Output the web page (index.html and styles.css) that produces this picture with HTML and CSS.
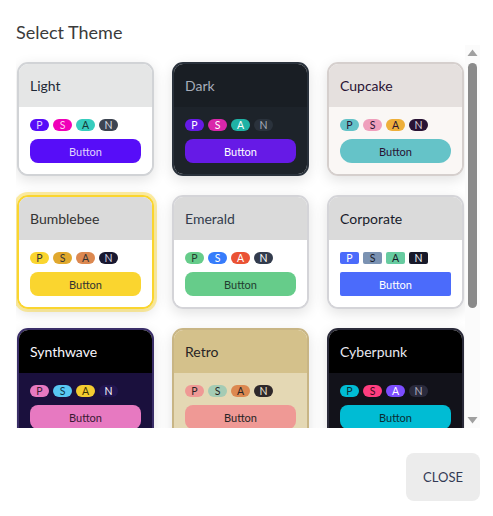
FILE: index.html
```html
<!DOCTYPE html>
<html>
<head>
<meta charset="utf-8">
<link rel="stylesheet" href="styles.css">
</head>
<body>
<div class="dialog">
  <h2 class="title">Select Theme</h2>
  <div class="pane">
    <div class="scroller">
      <div class="grid">
        <div class="card t-light">
          <div class="head">Light</div>
          <div class="body">
            <div class="badges"><span class="b p">P</span><span class="b s">S</span><span class="b a">A</span><span class="b n">N</span></div>
            <div class="btn">Button</div>
          </div>
        </div>
        <div class="card t-dark">
          <div class="head">Dark</div>
          <div class="body">
            <div class="badges"><span class="b p">P</span><span class="b s">S</span><span class="b a">A</span><span class="b n">N</span></div>
            <div class="btn">Button</div>
          </div>
        </div>
        <div class="card t-cupcake">
          <div class="head">Cupcake</div>
          <div class="body">
            <div class="badges"><span class="b p">P</span><span class="b s">S</span><span class="b a">A</span><span class="b n">N</span></div>
            <div class="btn">Button</div>
          </div>
        </div>
        <div class="card t-bumblebee selected">
          <div class="head">Bumblebee</div>
          <div class="body">
            <div class="badges"><span class="b p">P</span><span class="b s">S</span><span class="b a">A</span><span class="b n">N</span></div>
            <div class="btn">Button</div>
          </div>
        </div>
        <div class="card t-emerald">
          <div class="head">Emerald</div>
          <div class="body">
            <div class="badges"><span class="b p">P</span><span class="b s">S</span><span class="b a">A</span><span class="b n">N</span></div>
            <div class="btn">Button</div>
          </div>
        </div>
        <div class="card t-corporate">
          <div class="head">Corporate</div>
          <div class="body">
            <div class="badges"><span class="b p">P</span><span class="b s">S</span><span class="b a">A</span><span class="b n">N</span></div>
            <div class="btn">Button</div>
          </div>
        </div>
        <div class="card t-synthwave">
          <div class="head">Synthwave</div>
          <div class="body">
            <div class="badges"><span class="b p">P</span><span class="b s">S</span><span class="b a">A</span><span class="b n">N</span></div>
            <div class="btn">Button</div>
          </div>
        </div>
        <div class="card t-retro">
          <div class="head">Retro</div>
          <div class="body">
            <div class="badges"><span class="b p">P</span><span class="b s">S</span><span class="b a">A</span><span class="b n">N</span></div>
            <div class="btn">Button</div>
          </div>
        </div>
        <div class="card t-cyberpunk">
          <div class="head">Cyberpunk</div>
          <div class="body">
            <div class="badges"><span class="b p">P</span><span class="b s">S</span><span class="b a">A</span><span class="b n">N</span></div>
            <div class="btn">Button</div>
          </div>
        </div>
      </div>
    </div>
    <div class="scrollbar">
      <svg class="arrow" width="15" height="15" viewBox="0 0 15 15"><path d="M2.5 11 L7.5 4.5 L12.5 11 Z" fill="#a0a0a0"/></svg>
      <div class="track"><div class="thumb"></div></div>
      <svg class="arrow" width="15" height="15" viewBox="0 0 15 15"><path d="M2.5 4 L7.5 10.5 L12.5 4 Z" fill="#a0a0a0"/></svg>
    </div>
  </div>
  <div class="actions">
    <button class="close">CLOSE</button>
  </div>
</div>
</body>
</html>
```

FILE: styles.css
```css
* { box-sizing: border-box; }
html, body { margin: 0; padding: 0; background: #fff; }
body { font-family: Lato, "Noto Sans", sans-serif; color: #333; }

.dialog {
  width: 493px;
  height: 516px;
  padding: 20px 13px 15px 16px;
  display: flex;
  flex-direction: column;
}
.title {
  margin: 0;
  font-size: 18px;
  font-weight: 400;
  color: #3b3b3b;
  line-height: 24px;
  height: 25px;
}
.pane {
  display: flex;
  height: 383px;
}
.scroller {
  width: 449px;
  height: 383px;
  overflow: hidden;
}
.scrollbar {
  width: 15px;
  height: 383px;
  background: #fbfbfb;
  display: flex;
  flex-direction: column;
}
.arrow { display: block; flex: none; }
.track {
  flex: 1;
  display: flex;
  justify-content: center;
  padding-top: 3px;
}
.thumb {
  width: 9px;
  height: 245px;
  border-radius: 5px;
  background: #8a8a8a;
}
.grid {
  display: grid;
  grid-template-columns: repeat(3, 137px);
  column-gap: 18px;
  row-gap: 19px;
  padding: 17px 0 20px 1px;
}
.card {
  border: 2px solid #d4d4d8;
  border-radius: 11px;
  overflow: hidden;
  box-shadow: 0 4px 14px rgba(0, 0, 0, 0.12);
}
.card.selected {
  box-shadow: 0 0 0 3px rgba(250, 213, 47, 0.45), 0 4px 14px rgba(0, 0, 0, 0.12);
}
.head {
  height: 43px;
  padding: 0 11px;
  display: flex;
  align-items: center;
  font-size: 14px;
}
.body {
  padding: 12px 11px 11px;
  display: flex;
  flex-direction: column;
  gap: 8px;
}
.badges { display: flex; gap: 4px; }
.b {
  width: 19px;
  height: 12px;
  border-radius: 6px;
  font-size: 10.5px;
  line-height: 12px;
  text-align: center;
}
.btn {
  height: 24px;
  border-radius: 8px;
  display: flex;
  align-items: center;
  justify-content: center;
  font-size: 11px;
}

/* light */
.t-light { border-color: #d1d3d6; background: #fff; }
.t-light .head { background: #e5e6e6; color: #1f2937; }
.t-light .body { background: #fff; }
.t-light .p { background: #570df8; color: #e0d2fe; }
.t-light .s { background: #f000b8; color: #ffd1f4; }
.t-light .a { background: #37cdbe; color: #163835; }
.t-light .n { background: #3d4451; color: #d7dde4; }
.t-light .btn { background: #570df8; color: #e0d2fe; }

/* dark */
.t-dark { border-color: #2a323c; }
.t-dark .head { background: #191e24; color: #a6adbb; }
.t-dark .body { background: #1d232a; }
.t-dark .p { background: #661ae6; color: #fff; }
.t-dark .s { background: #d926aa; color: #fff; }
.t-dark .a { background: #1fb2a5; color: #fff; }
.t-dark .n { background: #2a323c; color: #a6adbb; }
.t-dark .btn { background: #661ae6; color: #fff; }

/* cupcake */
.t-cupcake { border-color: #d5cfcd; }
.t-cupcake .head { background: #e5e0de; color: #291334; }
.t-cupcake .body { background: #faf7f5; }
.t-cupcake .p { background: #65c3c8; color: #291334; }
.t-cupcake .s { background: #ef9fbc; color: #291334; }
.t-cupcake .a { background: #eeaf3a; color: #291334; }
.t-cupcake .n { background: #291334; color: #d6cfd9; }
.t-cupcake .btn { background: #65c3c8; color: #291334; border-radius: 12px; }

/* bumblebee */
.t-bumblebee { border-color: #fad52f; }
.t-bumblebee .head { background: #dadada; color: #333; }
.t-bumblebee .body { background: #fff; }
.t-bumblebee .p { background: #fad52f; color: #333; }
.t-bumblebee .s { background: #e0a82e; color: #333; }
.t-bumblebee .a { background: #dc8850; color: #333; }
.t-bumblebee .n { background: #181830; color: #d0d0e0; }
.t-bumblebee .btn { background: #fad52f; color: #333; }

/* emerald */
.t-emerald { border-color: #d4d4d8; }
.t-emerald .head { background: #dadada; color: #333c4d; }
.t-emerald .body { background: #fff; }
.t-emerald .p { background: #66cc8a; color: #223d30; }
.t-emerald .s { background: #377cfb; color: #fff; }
.t-emerald .a { background: #ea5234; color: #fff; }
.t-emerald .n { background: #333c4d; color: #fff; }
.t-emerald .btn { background: #66cc8a; color: #223d30; }

/* corporate */
.t-corporate { border-color: #d4d4d8; }
.t-corporate .head { background: #dadada; color: #181a2a; }
.t-corporate .body { background: #fff; }
.t-corporate .b { border-radius: 2px; }
.t-corporate .p { background: #4b6bfb; color: #fff; }
.t-corporate .s { background: #7b92b2; color: #181a2a; }
.t-corporate .a { background: #67cba0; color: #181a2a; }
.t-corporate .n { background: #181a2a; color: #edf2f7; }
.t-corporate .btn { background: #4b6bfb; color: #fff; border-radius: 2px; }

/* synthwave */
.t-synthwave { border-color: #3a2e68; }
.t-synthwave .head { background: #000; color: #f9f7fd; }
.t-synthwave .body { background: #1a103d; }
.t-synthwave .p { background: #e779c1; color: #3a1a33; }
.t-synthwave .s { background: #58c7f3; color: #0d3242; }
.t-synthwave .a { background: #f3cc30; color: #3f3304; }
.t-synthwave .n { background: #221551; color: #f9f7fd; }
.t-synthwave .btn { background: #e779c1; color: #3a1a33; }

/* retro */
.t-retro { border-color: #c8b585; }
.t-retro .head { background: #d4c18b; color: #282425; }
.t-retro .body { background: #e4d8b4; }
.t-retro .p { background: #ef9995; color: #282425; }
.t-retro .s { background: #a4cbb4; color: #282425; }
.t-retro .a { background: #dc8850; color: #282425; }
.t-retro .n { background: #2e282a; color: #ede6d4; }
.t-retro .btn { background: #ef9995; color: #282425; }

/* cyberpunk */
.t-cyberpunk { border-color: #2b2b3a; }
.t-cyberpunk .head { background: #000; color: #e8e8f0; }
.t-cyberpunk .body { background: #12121a; }
.t-cyberpunk .p { background: #00bcd4; color: #0a2d33; }
.t-cyberpunk .s { background: #ff3d7f; color: #3a0a1a; }
.t-cyberpunk .a { background: #7c4dff; color: #fff; }
.t-cyberpunk .n { background: #2a2a3c; color: #b0b0c0; }
.t-cyberpunk .btn { background: #00bcd4; color: #0a2d33; }

.actions {
  display: flex;
  justify-content: flex-end;
  margin-top: 25px;
}
.close {
  width: 74px;
  height: 48px;
  border: none;
  border-radius: 8px;
  background: #ececec;
  font-family: Lato, sans-serif;
  font-size: 13px;
  color: #333a55;
}
```
